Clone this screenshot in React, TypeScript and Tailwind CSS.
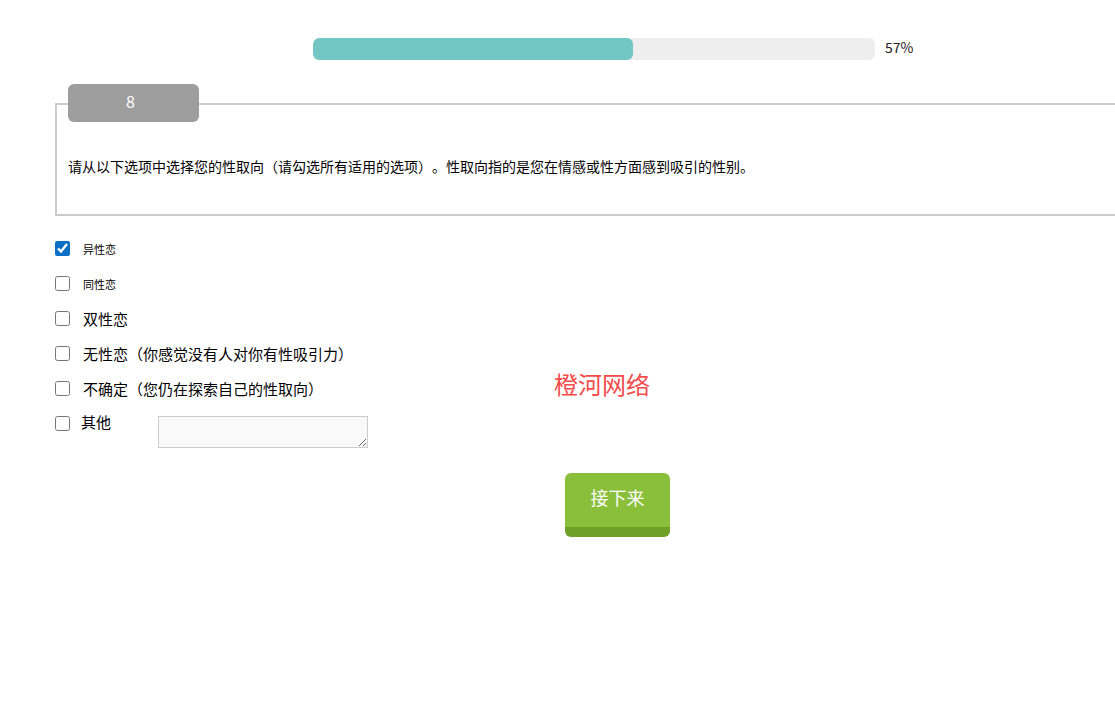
import React from "react";

const font = { fontFamily: '"Noto Sans CJK SC", "Noto Sans", sans-serif' };

type Opt = { label: string; small?: boolean; checked?: boolean; other?: boolean };

const options: Opt[] = [
  { label: "异性恋", small: true, checked: true },
  { label: "同性恋", small: true },
  { label: "双性恋" },
  { label: "无性恋（你感觉没有人对你有性吸引力）" },
  { label: "不确定（您仍在探索自己的性取向）" },
  { label: "其他", other: true },
];

export default function App() {
  return (
    <div
      className="relative w-[1115px] h-[711px] overflow-hidden bg-white text-black [text-spacing-trim:space-all]"
      style={font}
    >
      {/* progress */}
      <div className="flex items-center h-[60px] pt-[38px] pl-[313px]">
        <div className="w-[562px] h-[22px] rounded-[6px] bg-[#eeeeee] overflow-hidden">
          <div className="h-full w-[57%] rounded-[6px] bg-[#72c6c4]" />
        </div>
        <span className="ml-[10px] mb-[5px] text-[14px] leading-[16px] text-[#222]">57%</span>
      </div>

      {/* question box */}
      <div className="relative mt-[43px] ml-[55px] w-[1100px] h-[113px] border-2 border-[#cccccc] pt-[51px] pl-[11px]">
        <div className="absolute left-[11px] top-[-21px] w-[131px] h-[38px] rounded-[6px] bg-[#9e9e9e] flex items-center justify-center text-white text-[16px] pr-[6px] pb-[5px]">
          8
        </div>
        <p className="text-[14px] leading-[20px]">
          请从以下选项中选择您的性取向（请勾选所有适用的选项）。性取向指的是您在情感或性方面感到吸引的性别。
        </p>
      </div>

      {/* options */}
      <div className="mt-[15px] ml-[55px] flex flex-col">
        {options.map((o) => (
          <div key={o.label} className="h-[35px] flex items-start">
            <div className="h-[35px] flex items-center">
              <input
                type="checkbox"
                defaultChecked={o.checked}
                className="m-0 w-[15px] h-[15px] accent-[#0b6fc6]"
              />
            </div>
            <div className="h-[35px] flex items-center">
              <span
                className={
                  o.small
                    ? "ml-[13px] text-[11px] leading-[16px]"
                    : o.other
                    ? "ml-[11px] text-[15px] leading-[20px] mt-[-4px]"
                    : "ml-[13px] text-[15px] leading-[20px]"
                }
              >
                {o.label}
              </span>
            </div>
            {o.other && (
              <textarea className="ml-[47px] mt-[10px] w-[210px] h-[32px] border border-[#cccccc] bg-[#f9f9f9] resize-y" />
            )}
          </div>
        ))}
      </div>

      {/* watermark */}
      <div className="absolute left-[554px] top-[367px] text-[24px] leading-[34px] text-[#f44b4b]">
        橙河网络
      </div>

      {/* next button */}
      <div className="mt-[32px] ml-[565px]">
        <button className="w-[105px] h-[64px] rounded-[6px] bg-[#8abf3b] border-b-[10px] border-[#6f9f27] text-white text-[18px] leading-[24px] pb-[6px]">
          接下来
        </button>
      </div>
    </div>
  );
}
